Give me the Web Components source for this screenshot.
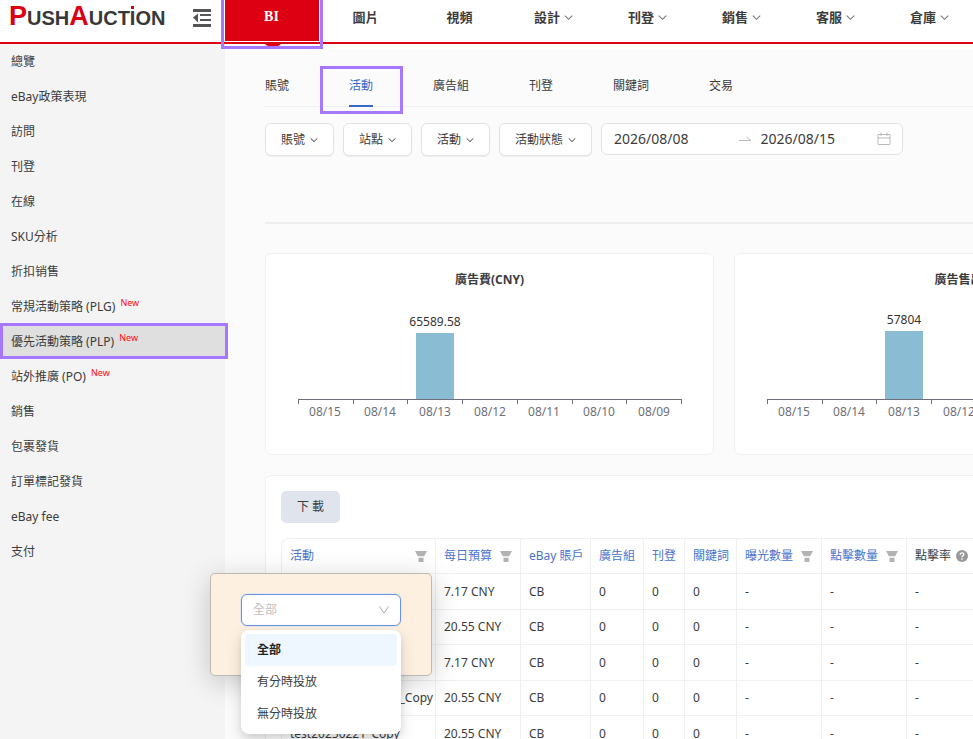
<!DOCTYPE html>
<html lang="zh-Hant">
<head>
<meta charset="utf-8">
<meta name="viewport" content="width=device-width, initial-scale=1">
<title>PushAuction BI</title>
<style>
  body {
    margin: 0;
    color: #3c3c3c;
    font: 12px/20px "Noto Sans", "Noto Sans CJK TC", sans-serif;
  }
</style>
</head>
<body>
<pa-app>
  <pa-header slot="header"></pa-header>
  <pa-sidebar slot="sidebar"></pa-sidebar>
  <pa-tabs></pa-tabs>
  <pa-filters></pa-filters>
  <pa-charts>
    <pa-bar-chart heading="廣告費(CNY)" value="65589.58" bar="66"></pa-bar-chart>
    <pa-bar-chart heading="廣告售出" value="57804" bar="68"></pa-bar-chart>
  </pa-charts>
  <pa-report>
    <pa-table></pa-table>
    <pa-filter-popup slot="popup"></pa-filter-popup>
  </pa-report>
</pa-app>

<script>
const chevron = (size) => `
  <svg class="chevron" width="${size}" height="${size}" viewBox="0 0 8 8" fill="none" stroke="currentColor" aria-hidden="true">
    <path d="M.7 2.4 4 5.6 7.3 2.4"/>
  </svg>`;

class PaElement extends HTMLElement {

    constructor() {
        super();
        this.attachShadow({ mode: 'open' });
    }

    connectedCallback() {
        this.shadowRoot.innerHTML = this.render();
    }
}

class PaApp extends PaElement {

    render() {
        return `
          <style>
              :host {
                display: grid;
                grid-template: auto 1fr / 225px minmax(0, 1fr);
                height: 100vh;
                overflow: hidden;
                background: #fbfbfb;
              }
              slot[name="header"] {
                display: block;
                grid-column: 1 / -1;
              }
              main {
                border-top: 5px solid #fff;
                min-height: 0;
                padding-left: 40px;
              }
          </style>
          <slot name="header"></slot>
          <slot name="sidebar"></slot>
          <main><slot></slot></main>
        `;
    }
}

class PaHeader extends PaElement {

    render() {
        const items = [
            ['圖片', false],
            ['視頻', false],
            ['設計', true],
            ['刊登', true],
            ['銷售', true],
            ['客服', true],
            ['倉庫', true]
        ];

        return `
          <style>
              :host {
                display: block;
                position: relative;
                z-index: 2;
              }
              header {
                background: #fff;
                border-bottom: 2px solid #dc0012;
                display: grid;
                grid-template-columns: 225px minmax(0, 1fr);
                height: 42px;
              }
              .brand {
                align-items: center;
                display: flex;
                justify-content: space-between;
                padding: 0 14px 6px 9px;
              }
              .logo {
                color: #383838;
                font: bold 20px/28px "Liberation Sans", sans-serif;
                padding-bottom: 2px;
                text-decoration: none;
                white-space: nowrap;
              }
              .logo b {
                color: #dc0012;
                font-size: 27px;
              }
              .logo span {
                position: relative;
              }
              .logo span::before {
                background: #dc0012;
                content: "";
                height: 3px;
                left: 1px;
                position: absolute;
                top: -1px;
                width: 3px;
              }
              .menu {
                background: none;
                border: 0;
                height: 18px;
                padding: 0;
              }
              .menu svg {
                display: block;
              }
              nav {
                display: flex;
              }
              nav a {
                align-items: center;
                box-sizing: border-box;
                color: #3c3c3c;
                display: flex;
                flex: 0 0 94px;
                font-size: 13px;
                font-weight: bold;
                gap: 4px;
                height: 41px;
                justify-content: center;
                padding: 0 1px 7px 0;
                text-decoration: none;
              }
              nav .chevron {
                color: #777;
              }
              nav .active {
                background: #dc0012;
                color: #fff;
                font-family: "Liberation Serif", serif;
                font-size: 14px;
                position: relative;
              }
              .active::before {
                background: #dc0012;
                border-radius: 0 0 8px 8px;
                content: "";
                height: 4px;
                left: 40px;
                position: absolute;
                top: 42px;
                width: 16px;
              }
              .active::after {
                border: 3px solid #a578ff;
                content: "";
                inset: -4px -4px -8px;
                position: absolute;
              }
          </style>
          <header>
            <div class="brand">
              <a class="logo" href="#"><b>P</b>USH<b>A</b>UCT<span>I</span>ON</a>
              <button class="menu" type="button" aria-label="收合選單">
                <svg width="18" height="18" viewBox="0 0 18 18" fill="#555" aria-hidden="true">
                  <path d="M0 0h18v3H0zM7 5h11v2H7zM7 10h11v2H7zM0 15h18v3H0zM0 8.500l5-4v9z"/>
                </svg>
              </button>
            </div>
            <nav>
              <a class="active" href="#">BI</a>
              ${items.map(([text, more]) => `<a href="#">${text}${more ? chevron(9) : ''}</a>`).join('')}
            </nav>
          </header>
        `;
    }
}

class PaSidebar extends PaElement {

    render() {
        const items = [
            '總覽', 'eBay政策表現', '訪問', '刊登', '在線', 'SKU分析', '折扣销售',
            '常規活動策略 (PLG)', '優先活動策略 (PLP)', '站外推廣 (PO)',
            '銷售', '包裹發貨', '訂單標記發貨', 'eBay fee', '支付'
        ];
        const fresh = [7, 8, 9];

        return `
          <style>
              :host {
                background: #f4f4f4;
                display: block;
              }
              ul {
                list-style: none;
                margin: 0;
                padding: 0;
              }
              a {
                box-sizing: border-box;
                color: inherit;
                display: flex;
                gap: 5px;
                height: 35px;
                line-height: 35px;
                padding-left: 11px;
                text-decoration: none;
              }
              a[aria-current] {
                background: #dfdfdf;
                position: relative;
              }
              a[aria-current]::after {
                border: 3px solid #a578ff;
                content: "";
                inset: -1px -3px 0 0;
                position: absolute;
              }
              sup {
                color: #ff0a14;
                font-size: 9px;
                line-height: 28px;
              }
          </style>
          <nav aria-label="BI">
            <ul>
              ${items.map((text, i) => `
                <li><a href="#"${i === 8 ? ' aria-current="page"' : ''}><span>${text}</span>${fresh.includes(i) ? '<sup>New</sup>' : ''}</a></li>
              `).join('')}
            </ul>
          </nav>
        `;
    }
}

class PaTabs extends PaElement {

    render() {
        return `
          <style>
              :host {
                border-bottom: 1px solid #f0f0f0;
                display: flex;
                gap: 60px;
                padding-top: 27px;
              }
              button {
                background: none;
                border: 0;
                border-bottom: 2px solid transparent;
                color: inherit;
                font: inherit;
                margin-bottom: -1px;
                padding: 0 0 9px;
                position: relative;
              }
              [aria-selected="true"] {
                border-color: #3a68c8;
                color: #3a68c8;
              }
              [aria-selected="true"]::after {
                border: 3px solid #a578ff;
                content: "";
                inset: -10px -30px -9px -29px;
                position: absolute;
              }
          </style>
          ${['賬號', '活動', '廣告組', '刊登', '關鍵詞', '交易'].map((text) => `
            <button type="button" role="tab" aria-selected="${text === '活動'}">${text}</button>
          `).join('')}
        `;
    }

    connectedCallback() {
        super.connectedCallback();
        this.setAttribute('role', 'tablist');
    }
}

class PaFilters extends PaElement {

    render() {
        return `
          <style>
              :host {
                align-items: flex-start;
                border-bottom: 2px solid #eee;
                display: flex;
                gap: 9px;
                padding: 16px 0 66px;
              }
              button, .range {
                align-items: center;
                background: #fff;
                border: 1px solid #e2e2e2;
                border-radius: 6px;
                box-sizing: border-box;
                display: flex;
                height: 33px;
              }
              button {
                box-shadow: 0 1px 1px #eee;
                color: inherit;
                font: inherit;
                gap: 5px;
                padding: 0 15px;
                white-space: nowrap;
              }
              .range {
                flex: 0 1 302px;
                height: 32px;
                min-width: 0;
                padding: 0 11px 0 12px;
              }
              input {
                background: none;
                border: 0;
                box-sizing: border-box;
                color: inherit;
                flex: 1 1 0;
                font: inherit;
                font-size: 14px;
                min-width: 0;
                outline: 0;
                padding: 0;
                width: 0;
              }
              input:first-child {
                flex-basis: 8px;
              }
              .range svg {
                flex: none;
              }
              .arrow {
                margin-right: 9px;
              }
          </style>
          ${['賬號', '站點', '活動', '活動狀態'].map((text) => `
            <button type="button">${text}${chevron(8)}</button>
          `).join('')}
          <div class="range">
            <input type="text" value="2026/08/08" aria-label="開始日期">
            <svg class="arrow" width="13" height="8" viewBox="0 0 13 8" fill="none" stroke="#bbb" aria-hidden="true">
              <path d="M0 5.500h12M7.500 2 12 5.500"/>
            </svg>
            <input type="text" value="2026/08/15" aria-label="結束日期">
            <svg width="14" height="14" viewBox="0 0 14 14" fill="none" stroke="#bbb" aria-hidden="true">
              <path d="M1 2.500h12v10H1zM1 6h12M4 .500v3.500M10 .500v3.500"/>
            </svg>
          </div>
        `;
    }
}

class PaCharts extends PaElement {

    render() {
        return `
          <style>
              :host {
                display: grid;
                gap: 20px;
                grid-auto-columns: 449px;
                grid-auto-flow: column;
                padding: 29px 0 20px;
              }
          </style>
          <slot></slot>
        `;
    }
}

class PaBarChart extends PaElement {

    render() {
        const days = ['08/15', '08/14', '08/13', '08/12', '08/11', '08/10', '08/09'];
        const start = 32;
        const axis = 110;
        const step = 383 / days.length;
        const bar = Number(this.getAttribute('bar'));
        const middle = Math.round(start + step * 2.5);
        const ticks = [0, 1, 2, 3, 4, 5, 6, 7]
            .map((i) => `M${Math.round(start + i * step) + 0.5} ${axis}v5`)
            .join('');

        return `
          <style>
              :host {
                background: #fff;
                border: 1px solid #f0f0f0;
                border-radius: 6px;
                display: block;
                padding-top: 17px;
              }
              h3 {
                font-size: 12px;
                line-height: 18px;
                margin: 0;
                text-align: center;
              }
              svg {
                display: block;
                font-size: 12px;
                text-anchor: middle;
                width: 100%;
              }
              .day {
                fill: #6e7079;
              }
          </style>
          <h3>${this.getAttribute('heading')}</h3>
          <svg height="165">
            <rect x="${middle - 19}" y="${axis - bar}" width="38" height="${bar}" fill="#8abcd4"/>
            <path d="M${start} ${axis + 0.5}h384${ticks}" fill="none" stroke="#6e7079"/>
            <text x="${middle}" y="${axis - bar - 7}" fill="#333">${this.getAttribute('value')}</text>
            ${days.map((day, i) => `<text class="day" x="${Math.round(start + step * (i + 0.5))}" y="127">${day}</text>`).join('')}
          </svg>
        `;
    }
}

class PaReport extends PaElement {

    render() {
        return `
          <style>
              :host {
                background: #fff;
                border: 1px solid #f0f0f0;
                border-radius: 6px;
                display: block;
                min-width: 100%;
                padding: 15px;
                position: relative;
                width: max-content;
              }
              button {
                background: #e0e5ed;
                border: 0;
                border-radius: 5px;
                color: inherit;
                display: block;
                font: inherit;
                height: 32px;
                margin-bottom: 15px;
                padding: 0 16px;
              }
          </style>
          <button type="button">下 載</button>
          <slot></slot>
          <slot name="popup"></slot>
        `;
    }
}

class PaTable extends PaElement {

    render() {
        const filter = `
          <svg width="12" height="11" viewBox="0 0 12 11" fill="#b3b3b3" aria-hidden="true">
            <path d="M0 0h12L9 5.500H3zM3.500 6.500h5V11h-5z"/>
            <path d="M3 6h6" stroke="#fff"/>
          </svg>`;
        const help = `
          <svg width="12" height="12" viewBox="0 0 12 12" aria-hidden="true">
            <circle cx="6" cy="6" r="6" fill="#999"/>
            <path d="M4.200 4.700C4.200 2.300 7.900 2.400 7.800 4.500 7.800 5.800 6 5.700 6 7.300M6 8.300v1.400" fill="none" stroke="#fff" stroke-width="1.400"/>
          </svg>`;
        const columns = [
            [154, '活動', filter],
            [85, '每日預算', filter],
            [70, 'eBay 賬戶', ''],
            [53, '廣告組', ''],
            [41, '刊登', ''],
            [52, '關鍵詞', ''],
            [85, '曝光數量', filter],
            [85, '點擊數量', filter],
            [100, '點擊率', help]
        ];
        const rows = [
            ['', '7.17 CNY'],
            ['', '20.55 CNY'],
            ['', '7.17 CNY'],
            ['test20250221_Copy_Copy', '20.55 CNY'],
            ['test20250221_Copy', '20.55 CNY']
        ];

        return `
          <style>
              :host {
                border: solid #f0f0f0;
                border-radius: 8px 0 0;
                border-width: 1px 0 0 1px;
                display: block;
              }
              table {
                border-collapse: separate;
                border-spacing: 0;
                table-layout: fixed;
                width: 725px;
              }
              th, td {
                border: solid #f0f0f0;
                border-width: 0 1px 1px 0;
                box-sizing: border-box;
                font-weight: normal;
                height: 36px;
                padding: 0 8px;
                text-align: left;
                white-space: nowrap;
              }
              th, tr:nth-child(even) td {
                height: 35px;
              }
              th div {
                align-items: center;
                display: flex;
                justify-content: space-between;
              }
              a {
                color: #4a74cc;
                text-decoration: none;
              }
              th:last-child div {
                gap: 5px;
                justify-content: flex-start;
              }
          </style>
          <table>
            <colgroup>${columns.map(([width]) => `<col style="width: ${width}px">`).join('')}</colgroup>
            <thead>
              <tr>${columns.map(([, text, icon]) => `
                <th scope="col"><div>${icon === help ? `<span>${text}</span>` : `<a href="#">${text}</a>`}${icon}</div></th>`).join('')}
              </tr>
            </thead>
            <tbody>
              ${rows.map((row) => `
                <tr>${[...row, 'CB', '0', '0', '0', '-', '-', '-'].map((cell) => `<td>${cell}</td>`).join('')}</tr>
              `).join('')}
            </tbody>
          </table>
        `;
    }
}

class PaFilterPopup extends PaElement {

    render() {
        return `
          <style>
              :host {
                background: #fef0e1;
                border: 1px solid #bdb9b5;
                border-radius: 5px;
                box-shadow: 0 6px 28px rgba(0, 0, 0, .2);
                box-sizing: border-box;
                display: block;
                height: 103px;
                left: -56px;
                padding: 20px 30px;
                position: absolute;
                top: 97px;
                width: 222px;
                z-index: 1;
              }
              label {
                align-items: center;
                color: #bfbfbf;
                display: grid;
              }
              select, svg {
                grid-area: 1 / 1;
              }
              svg {
                justify-self: end;
                margin-right: 12px;
                pointer-events: none;
              }
              select {
                appearance: none;
                background: #fff;
                border: 1px solid #6c93d8;
                border-radius: 6px;
                box-shadow: 0 0 0 1px #e3e8f1;
                box-sizing: border-box;
                color: inherit;
                font: inherit;
                height: 32px;
                outline: 0;
                padding: 0 11px;
                width: 100%;
              }
              ul {
                background: #fff;
                border-radius: 8px;
                box-shadow: 0 6px 16px rgba(0, 0, 0, .14), 0 3px 6px rgba(0, 0, 0, .08);
                list-style: none;
                margin: 4px 0 0;
                padding: 4px;
                position: relative;
              }
              li {
                border-radius: 4px;
                line-height: 32px;
                padding: 0 12px;
              }
              [aria-selected="true"] {
                background: #eef6ff;
                color: #222;
                font-weight: bold;
              }
          </style>
          <label>
            <select aria-label="投放方式"><option>全部</option></select>
            <svg width="10" height="8" viewBox="0 0 10 8" fill="none" stroke="#aaa" aria-hidden="true">
              <path d="M.500.500 5 7.200 9.500.500"/>
            </svg>
          </label>
          <ul role="listbox" aria-label="投放方式">
            <li role="option" aria-selected="true">全部</li>
            <li role="option">有分時投放</li>
            <li role="option">無分時投放</li>
          </ul>
        `;
    }
}

window.customElements.define('pa-app', PaApp);
window.customElements.define('pa-header', PaHeader);
window.customElements.define('pa-sidebar', PaSidebar);
window.customElements.define('pa-tabs', PaTabs);
window.customElements.define('pa-filters', PaFilters);
window.customElements.define('pa-charts', PaCharts);
window.customElements.define('pa-bar-chart', PaBarChart);
window.customElements.define('pa-report', PaReport);
window.customElements.define('pa-table', PaTable);
window.customElements.define('pa-filter-popup', PaFilterPopup);
</script>
</body>
</html>
